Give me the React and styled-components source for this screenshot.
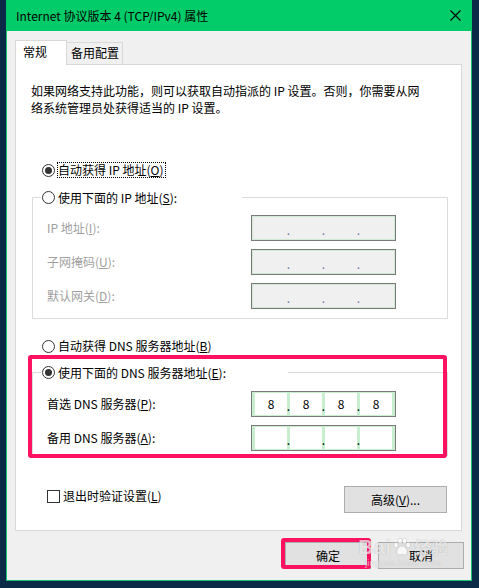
import React from "react";
import styled, { createGlobalStyle } from "styled-components";

const GlobalStyle = createGlobalStyle`
  html, body { margin: 0; padding: 0; background: #0a2a48; }
  body {
    font-family: "Noto Sans CJK SC", "Noto Sans", sans-serif;
    font-size: 12px;
    color: #000;
  }
  * { box-sizing: border-box; }
`;

const Page = styled.div`
  width: 479px;
  height: 588px;
  overflow: hidden;
  padding-left: 6px;
  background: #0a2a48;
`;

const Window = styled.div`
  width: 466px;
  height: 581px;
  border: 1px solid #16c26d;
  border-top: 0;
  background: #f0f0f0;
  display: flex;
  flex-direction: column;
`;

const TitleBar = styled.div`
  height: 31px;
  flex: none;
  background: #02cc6a;
  display: flex;
  align-items: center;
  justify-content: space-between;
  padding: 0 10px 0 9px;
  margin: 0 -1px;
  padding-left: 10px;
  padding-right: 11px;
`;

const Title = styled.div`
  font-size: 12px;
  line-height: 16px;
  color: #000;
  white-space: nowrap;
`;

const Body = styled.div`
  flex: 1;
  display: flex;
  flex-direction: column;
  padding: 9px 9px 0 8px;
`;

const TabRow = styled.div`
  display: flex;
  align-items: flex-end;
  height: 25px;
  margin-bottom: -1px;
  position: relative;
  z-index: 1;
`;

const Tab = styled.div`
  line-height: 17px;
  white-space: nowrap;
  border: 1px solid #d9d9d9;
  ${(p) =>
    p.$active
      ? `
    width: 52px;
    height: 25px;
    background: #fff;
    border-bottom: none;
    padding: 2px 0 0 7px;
  `
      : `
    width: 56px;
    height: 22px;
    margin-bottom: 1px;
    background: #f0f0f0;
    border-left: none;
    border-bottom: none;
    padding: 1px 0 0 4px;
  `}
`;

const Panel = styled.div`
  height: 467px;
  background: #fff;
  border: 1px solid #d9d9d9;
  padding: 0 13px 0 15px;
  display: flex;
  flex-direction: column;
`;

const Description = styled.p`
  margin: 17px 0 0 0;
  line-height: 17px;
  white-space: nowrap;
`;

const RadioRow = styled.div`
  display: flex;
  align-items: center;
  height: 16px;
  margin-top: ${(p) => p.$mt}px;
  margin-left: 11px;
`;

const RadioCircle = styled.span`
  width: 13px;
  height: 13px;
  flex: none;
  border-radius: 50%;
  border: 1px solid #333;
  background: #fff;
  display: flex;
  align-items: center;
  justify-content: center;
  &::after {
    content: "";
    display: ${(p) => (p.$checked ? "block" : "none")};
    width: 7px;
    height: 7px;
    border-radius: 50%;
    background: #333;
  }
`;

const Label = styled.span`
  margin-left: ${(p) => (p.$focus ? 2 : 3)}px;
  line-height: 14px;
  white-space: nowrap;
  color: ${(p) => (p.$disabled ? "#a0a0a0" : "#000")};
  ${(p) => (p.$focus ? "border: 1px dotted #000; padding: 0 1px 0 0;" : "")}
`;

const GroupBox = styled.div`
  position: relative;
  margin-top: ${(p) => p.$mt}px;
  margin-left: 1px;
  border: 1px solid #dcdcdc;
`;

const Legend = styled.div`
  height: 17px;
  width: ${(p) => p.$w}px;
  margin-top: -9px;
  margin-left: 8px;
  padding-left: 1px;
  background: #fff;
  display: flex;
  align-items: center;
`;

const Rows = styled.div`
  display: grid;
  grid-template-columns: 1fr 145px;
  row-gap: 8px;
  align-items: center;
  padding: ${(p) => p.$pt}px 51px ${(p) => p.$pb}px 14px;
`;

const FieldLabel = styled.span`
  white-space: nowrap;
  line-height: 16px;
  color: ${(p) => (p.$disabled ? "#a0a0a0" : "#000")};
`;

const IpBox = styled.div`
  width: 145px;
  height: 26px;
  border: 1px solid #7a7a7a;
  padding: 1px 3px;
  display: flex;
  background: ${(p) => (p.$disabled ? "#f0f0f0" : "#c8eed0")};
  box-shadow: ${(p) => (p.$disabled ? "inset 0 0 0 1px #cfe9d3" : "none")};
`;

const Cell = styled.div`
  width: 32px;
  height: 22px;
  background: ${(p) => (p.$disabled ? "transparent" : "#fff")};
  display: flex;
  align-items: center;
  justify-content: center;
  line-height: 16px;
  font-size: 12px;
`;

const Sep = styled.div`
  width: 3px;
  height: 22px;
  display: flex;
  justify-content: center;
  line-height: 26px;
  font-size: 12px;
  color: ${(p) => (p.$disabled ? "#7a7a9a" : "#000")};
  overflow: visible;
`;

const Highlight = styled.div`
  position: absolute;
  top: ${(p) => p.$t}px;
  left: ${(p) => p.$l}px;
  right: ${(p) => p.$r}px;
  bottom: ${(p) => p.$b}px;
  border: 4px solid #fd1262;
  border-radius: 3px;
  pointer-events: none;
`;

const BottomRow = styled.div`
  margin-top: 30px;
  display: flex;
  justify-content: space-between;
  align-items: flex-start;
  padding: 0 1px 0 16px;
`;

const CheckWrap = styled.div`
  margin-top: 3px;
  display: flex;
  align-items: center;
`;

const CheckBox = styled.span`
  width: 13px;
  height: 13px;
  border: 1px solid #333;
  background: #fff;
  flex: none;
`;

const Button = styled.div`
  position: relative;
  width: ${(p) => p.$w}px;
  height: 27px;
  background: #e1e1e1;
  border: 1px solid #adadad;
  display: flex;
  align-items: center;
  justify-content: center;
  line-height: 16px;
  white-space: nowrap;
`;

const ButtonRow = styled.div`
  position: relative;
  margin-top: 11px;
  margin-right: -2px;
  display: flex;
  justify-content: flex-end;
  gap: 7px;
`;

const Watermark = styled.div`
  position: absolute;
  right: 16px;
  top: -7px;
  display: flex;
  flex-direction: column;
  align-items: center;
  pointer-events: none;
  color: rgba(255, 255, 255, 0.7);
  text-shadow: 0 0 1px rgba(0, 0, 0, 0.25);
`;

const WmMain = styled.div`
  display: flex;
  align-items: center;
  font-family: "Liberation Sans", Arial, sans-serif;
  font-weight: bold;
  font-size: 21px;
  line-height: 24px;
  & > .cn {
    font-family: "Noto Sans CJK SC", sans-serif;
    font-size: 17px;
    font-weight: bold;
    margin-left: 1px;
  }
`;

const WmSub = styled.div`
  font-family: "Liberation Sans", Arial, sans-serif;
  font-size: 9px;
  line-height: 10px;
  margin-top: -1px;
  letter-spacing: 0.2px;
`;

function Ip({ values, disabled }) {
  const v = values || ["", "", "", ""];
  return (
    <IpBox $disabled={disabled}>
      <Cell $disabled={disabled}>{v[0]}</Cell>
      <Sep $disabled={disabled}>.</Sep>
      <Cell $disabled={disabled}>{v[1]}</Cell>
      <Sep $disabled={disabled}>.</Sep>
      <Cell $disabled={disabled}>{v[2]}</Cell>
      <Sep $disabled={disabled}>.</Sep>
      <Cell $disabled={disabled}>{v[3]}</Cell>
    </IpBox>
  );
}

function Paw() {
  return (
    <svg width="20" height="20" viewBox="0 0 20 20" style={{ margin: "0 1px" }}>
      <g fill="rgba(255,255,255,0.75)" stroke="rgba(0,0,0,0.18)" strokeWidth="0.6">
        <ellipse cx="4" cy="8" rx="2.2" ry="2.8" />
        <ellipse cx="8" cy="4" rx="2.2" ry="2.8" />
        <ellipse cx="12.5" cy="4" rx="2.2" ry="2.8" />
        <ellipse cx="16.2" cy="8" rx="2.2" ry="2.8" />
        <path d="M10 9 C6 9 4 14 5 16.5 C6 19 9 17.5 10 17.5 C11 17.5 14 19 15 16.5 C16 14 14 9 10 9 Z" />
      </g>
    </svg>
  );
}

export default function App() {
  return (
    <>
      <GlobalStyle />
      <Page>
        <Window>
          <TitleBar>
            <Title>Internet 协议版本 4 (TCP/IPv4) 属性</Title>
            <svg width="11" height="11" viewBox="0 0 11 11">
              <path d="M0.5 0.5 L10.5 10.5 M10.5 0.5 L0.5 10.5" stroke="#000" strokeWidth="1.1" fill="none" />
            </svg>
          </TitleBar>
          <Body>
            <TabRow>
              <Tab $active>常规</Tab>
              <Tab>备用配置</Tab>
            </TabRow>
            <Panel>
              <Description>
                如果网络支持此功能，则可以获取自动指派的 IP 设置。否则，你需要从网
                <br />
                络系统管理员处获得适当的 IP 设置。
              </Description>

              <RadioRow $mt={46}>
                <RadioCircle $checked />
                <Label $focus>
                  自动获得 IP 地址(<u>O</u>)
                </Label>
              </RadioRow>

              <GroupBox $mt={19}>
                <Legend $w={201}>
                  <RadioCircle />
                  <Label>
                    使用下面的 IP 地址(<u>S</u>):
                  </Label>
                </Legend>
                <Rows $pt={9} $pb={9}>
                  <FieldLabel $disabled>
                    IP 地址(<u>I</u>):
                  </FieldLabel>
                  <Ip disabled />
                  <FieldLabel $disabled>
                    子网掩码(<u>U</u>):
                  </FieldLabel>
                  <Ip disabled />
                  <FieldLabel $disabled>
                    默认网关(<u>D</u>):
                  </FieldLabel>
                  <Ip disabled />
                </Rows>
              </GroupBox>

              <RadioRow $mt={19}>
                <RadioCircle />
                <Label>
                  自动获得 DNS 服务器地址(<u>B</u>)
                </Label>
              </RadioRow>

              <GroupBox $mt={18}>
                <Legend $w={247}>
                  <RadioCircle $checked />
                  <Label>
                    使用下面的 DNS 服务器地址(<u>E</u>):
                  </Label>
                </Legend>
                <Rows $pt={10} $pb={4}>
                  <FieldLabel>
                    首选 DNS 服务器(<u>P</u>):
                  </FieldLabel>
                  <Ip values={["8", "8", "8", "8"]} />
                  <FieldLabel>
                    备用 DNS 服务器(<u>A</u>):
                  </FieldLabel>
                  <Ip />
                </Rows>
                <Highlight $t={-18} $l={-5} $r={0} $b={-3} />
              </GroupBox>

              <BottomRow>
                <CheckWrap>
                  <CheckBox />
                  <Label>
                    退出时验证设置(<u>L</u>)
                  </Label>
                </CheckWrap>
                <Button $w={103}>
                  高级(<u>V</u>)...
                </Button>
              </BottomRow>
            </Panel>

            <ButtonRow>
              <Button $w={86}>
                确定
                <Highlight $t={-5} $l={-5} $r={-1} $b={-1} />
              </Button>
              <Button $w={86}>取消</Button>
              <Watermark>
                <WmMain>
                  Bai
                  <Paw />
                  <span className="cn">经验</span>
                </WmMain>
                <WmSub>jingyan.baidu.com</WmSub>
              </Watermark>
            </ButtonRow>
          </Body>
        </Window>
      </Page>
    </>
  );
}
